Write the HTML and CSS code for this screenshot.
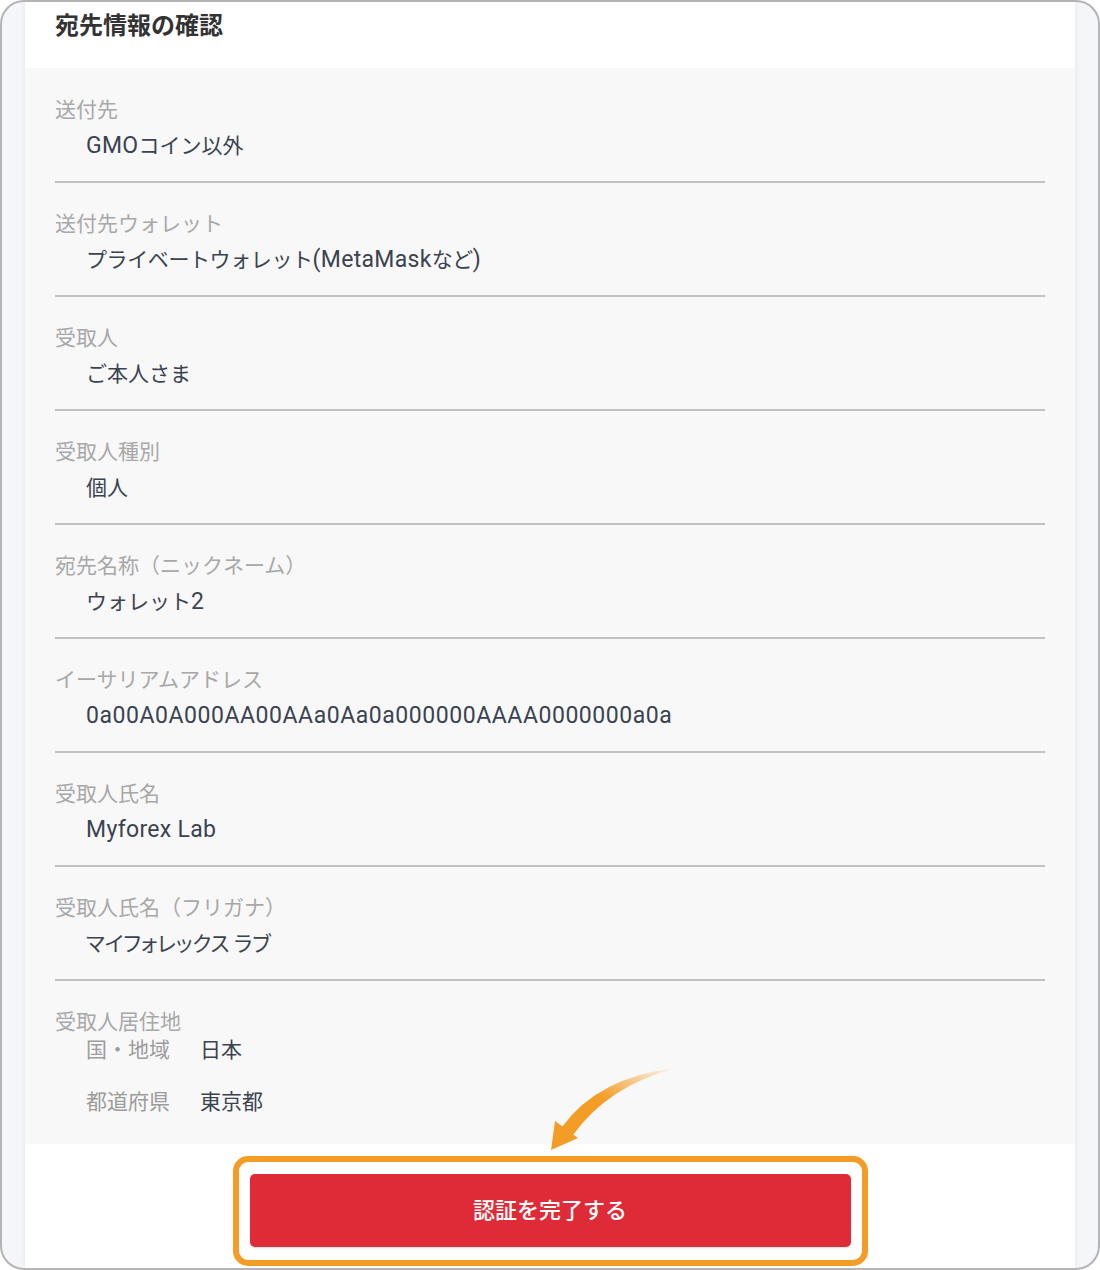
FILE: index.html
```html
<!DOCTYPE html>
<html lang="ja">
<head>
  <meta charset="UTF-8">
  <meta name="viewport" content="width=device-width, initial-scale=1.0">
  <title>宛先情報の確認</title>
  <link rel="stylesheet" href="styles.css">
</head>
<body>
  <div class="screen">
    <div class="panel">
      <div class="panel-header">
        <h1>宛先情報の確認</h1>
      </div>

      <div class="detail-list">
        <div class="detail">
          <p class="label">送付先</p>
          <p class="value"><span class="latin">GMO</span>コイン以外</p>
        </div>
        <div class="detail">
          <p class="label">送付先ウォレット</p>
          <p class="value tight">プライベートウォレット<span class="latin">(MetaMask</span>など<span class="latin">)</span></p>
        </div>
        <div class="detail">
          <p class="label">受取人</p>
          <p class="value">ご本人さま</p>
        </div>
        <div class="detail">
          <p class="label">受取人種別</p>
          <p class="value">個人</p>
        </div>
        <div class="detail">
          <p class="label">宛先名称（ニックネーム）</p>
          <p class="value">ウォレット<span class="latin">2</span></p>
        </div>
        <div class="detail">
          <p class="label">イーサリアムアドレス</p>
          <p class="value"><span class="latin address">0a00A0A000AA00AAa0Aa0a000000AAAA0000000a0a</span></p>
        </div>
        <div class="detail">
          <p class="label">受取人氏名</p>
          <p class="value"><span class="latin">Myforex Lab</span></p>
        </div>
        <div class="detail">
          <p class="label">受取人氏名（フリガナ）</p>
          <p class="value kana">マイフォレックス ラブ</p>
        </div>
        <div class="detail last">
          <p class="label">受取人居住地</p>
          <div class="sub-list">
            <span class="sub-label">国・地域</span>
            <span class="sub-value">日本</span>
            <span class="sub-label">都道府県</span>
            <span class="sub-value">東京都</span>
          </div>
        </div>
      </div>

      <div class="panel-footer">
        <div class="highlight">
          <button class="submit-btn">認証を完了する</button>
        </div>
      </div>
    </div>

    <!-- annotation arrow pointing at the button -->
    <svg class="pointer-arrow" width="150" height="100" viewBox="0 0 150 100">
      <defs>
        <linearGradient id="arrowFade" x1="0" y1="1" x2="1" y2="0">
          <stop offset="0" stop-color="#f39c26"/>
          <stop offset="0.45" stop-color="#f39c26"/>
          <stop offset="1" stop-color="#f39c26" stop-opacity="0"/>
        </linearGradient>
      </defs>
      <path d="M22 67 Q58 17 136 8 Q68 26 33 75 Z" fill="url(#arrowFade)"/>
      <path d="M11 90 L15 61 L38 78 Z" fill="#f39c26"/>
    </svg>
  </div>
</body>
</html>
```

FILE: styles.css
```css
body {
  margin: 0;
  font-family: "Noto Sans CJK JP", "Noto Sans", sans-serif;
  background: #fff;
}
p {
  margin: 0;
}
.screen {
  position: relative;
  width: 1100px;
  height: 1270px;
  box-sizing: border-box;
  border: 2px solid #b4b4b4;
  border-radius: 24px;
  overflow: hidden;
  background: #f5f6f9;
}
.panel {
  margin: 0 23px;
  height: 100%;
  background: #fff;
  box-shadow: 0 0 6px rgba(0, 0, 0, 0.08);
  display: flex;
  flex-direction: column;
}
.panel-header {
  flex-shrink: 0;
  height: 66px;
  padding: 7px 30px 0;
  box-sizing: border-box;
}
.panel-header h1 {
  margin: 0;
  font-size: 24px;
  line-height: 30px;
  font-weight: 700;
  color: #333;
}
.detail-list {
  flex-shrink: 0;
  background: #f8f8f8;
  padding: 1px 30px 0;
}
.detail {
  padding: 25px 0 23px;
  border-bottom: 2px solid #c2c2c2;
}
.detail.last {
  border-bottom: none;
  padding-bottom: 30px;
}
.label {
  height: 28px;
  font-size: 21px;
  line-height: 28px;
  color: #a8a8a8;
}
.value {
  height: 28px;
  margin-top: 8px;
  padding-left: 31px;
  font-size: 21px;
  line-height: 28px;
  color: #3a4350;
  white-space: nowrap;
}
.value.tight {
  letter-spacing: -0.4px;
}
.value.kana {
  font-feature-settings: "palt";
}
.latin {
  font-family: "Roboto", sans-serif;
  font-size: 23px;
  line-height: 1;
  letter-spacing: 0.3px;
}
.latin.address {
  letter-spacing: 0.55px;
}
.sub-list {
  display: grid;
  grid-template-columns: 114px auto;
  row-gap: 24px;
  padding-left: 31px;
  font-size: 21px;
  line-height: 28px;
}
.sub-label {
  color: #9c9c9c;
}
.sub-value {
  color: #3a4350;
}
.panel-footer {
  flex: 1;
  display: flex;
  justify-content: center;
  padding-top: 12px;
}
.highlight {
  flex-shrink: 0;
  width: 635px;
  height: 110px;
  box-sizing: border-box;
  border: 6px solid #f39c26;
  border-radius: 15px;
  padding: 12px 11px;
  background: #fff;
}
.submit-btn {
  display: block;
  width: 100%;
  height: 73px;
  padding: 0 0 5px;
  border: none;
  border-radius: 5px;
  background: #df2b38;
  color: #fff;
  font-family: "Noto Sans CJK JP", sans-serif;
  font-size: 22px;
  font-weight: 500;
  box-shadow: 0 1px 2px rgba(0, 0, 0, 0.15);
}
.pointer-arrow {
  position: absolute;
  left: 538px;
  top: 1058px;
}
```
